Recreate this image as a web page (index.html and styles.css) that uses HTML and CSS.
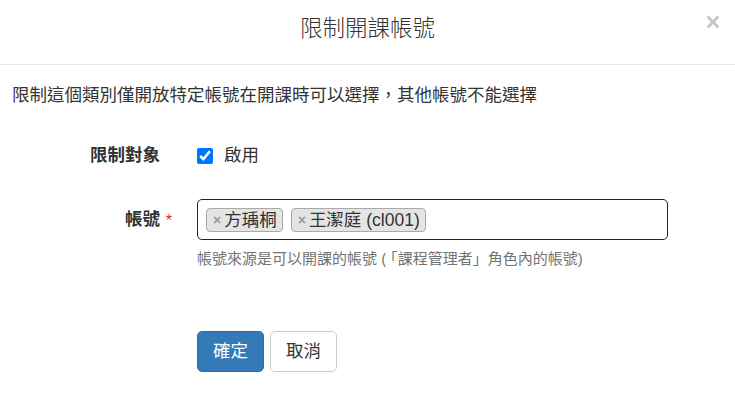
FILE: index.html
```html
<!DOCTYPE html>
<html lang="zh-Hant">
<head>
  <meta charset="UTF-8">
  <meta name="viewport" content="width=device-width, initial-scale=1.0">
  <title>限制開課帳號</title>
  <link rel="stylesheet" href="styles.css">
</head>
<body>
  <div class="modal">
    <div class="modal-header">
      <h4 class="modal-title">限制開課帳號</h4>
      <button class="close" type="button" aria-label="Close">
        <svg width="12" height="12" viewBox="0 0 12 12">
          <path d="M1.5 1.5 L10.5 10.5 M10.5 1.5 L1.5 10.5" stroke="#c6c6c6" stroke-width="3" stroke-linecap="square"/>
        </svg>
      </button>
    </div>

    <div class="modal-body">
      <p class="intro">限制這個類別僅開放特定帳號在開課時可以選擇，其他帳號不能選擇</p>

      <div class="form-row row-enable">
        <label class="form-label" for="enable">限制對象</label>
        <div class="form-control-col check-line">
          <input type="checkbox" id="enable" checked>
          <span>啟用</span>
        </div>
      </div>

      <div class="form-row row-accounts">
        <label class="form-label required">帳號</label>
        <div class="form-control-col">
          <div class="tag-input">
            <span class="tag"><span class="tag-remove">×</span>方瑀桐</span>
            <span class="tag"><span class="tag-remove">×</span>王潔庭 (cl001)</span>
          </div>
          <p class="help-block">帳號來源是可以開課的帳號 (<span class="bracket">「</span>課程管理者」角色內的帳號)</p>
        </div>
      </div>

      <div class="form-row row-actions">
        <div class="form-label"></div>
        <div class="form-control-col buttons">
          <button class="btn btn-primary" type="button">確定</button>
          <button class="btn btn-default" type="button">取消</button>
        </div>
      </div>
    </div>
  </div>
</body>
</html>
```

FILE: styles.css
```css
body {
  margin: 0;
  background: #fff;
  color: #333;
  font-family: "Liberation Sans", "Noto Sans CJK TC", sans-serif;
  font-size: 17.5px;
  line-height: 25px;
}
.modal {
  width: 735px;
}
.modal-header {
  position: relative;
  height: 65px;
  box-sizing: border-box;
  padding-top: 16px;
  border-bottom: 1px solid #e5e5e5;
  text-align: center;
}
.modal-title {
  margin: 0;
  font-size: 22.5px;
  line-height: 25px;
  font-weight: 300;
  color: #333;
}
.close {
  position: absolute;
  top: 16px;
  right: 16px;
  padding: 0;
  border: none;
  background: none;
  cursor: pointer;
  line-height: 0;
}
.modal-body {
  padding: 18px 12px 30px;
}
.intro {
  margin: 0 0 35px;
}
.form-row {
  display: flex;
  align-items: flex-start;
}
.form-label {
  width: 148px;
  flex: none;
  text-align: right;
  font-weight: bold;
  position: relative;
}
.form-control-col {
  margin-left: 37px;
  width: 471px;
}
.check-line {
  display: flex;
  align-items: center;
  gap: 11px;
}
.check-line input {
  width: 16px;
  height: 16px;
  margin: 0;
}
.row-accounts {
  margin-top: 31px;
}
.row-accounts .form-label {
  line-height: 41px;
}
.required::after {
  content: "*";
  position: absolute;
  right: -12px;
  top: 1px;
  color: #d9302c;
  font-weight: normal;
  font-size: 16px;
}
.tag-input {
  height: 41px;
  box-sizing: border-box;
  border: 1px solid #222;
  border-radius: 5px;
  padding: 8px 8px 0;
  display: flex;
  gap: 8px;
}
.tag {
  display: inline-flex;
  align-items: center;
  height: 24px;
  box-sizing: border-box;
  padding: 0 5px 0 6px;
  background: #e4e4e4;
  border: 1px solid #aaa;
  border-radius: 4px;
  color: #333;
  line-height: 22px;
}
.tag-remove {
  color: #999;
  font-weight: bold;
  font-size: 14px;
  margin-right: 3px;
}
.help-block {
  margin: 8px 0 0;
  font-size: 15px;
  line-height: 21px;
  color: #737373;
}
.bracket {
  margin-left: 4px;
}
.row-actions {
  margin-top: 62px;
}
.buttons {
  display: flex;
  gap: 6px;
}
.btn {
  padding: 7px 15px;
  font-family: inherit;
  font-size: 17.5px;
  line-height: 25px;
  border: 1px solid transparent;
  border-radius: 5px;
  cursor: pointer;
}
.btn-primary {
  background: #337ab7;
  border-color: #2e6da4;
  color: #fff;
}
.btn-default {
  background: #fff;
  border-color: #ccc;
  color: #333;
}
```
